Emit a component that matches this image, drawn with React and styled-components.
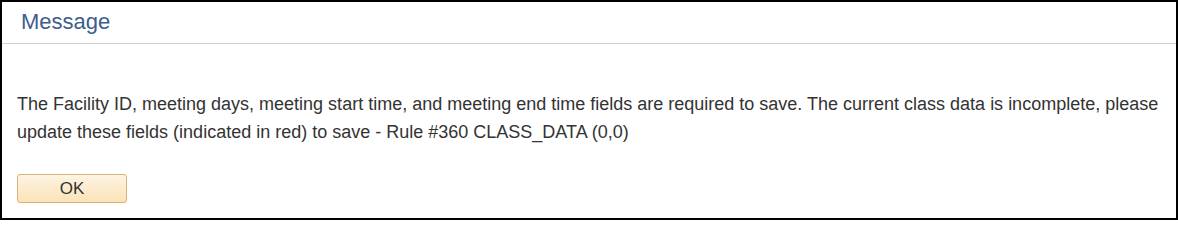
import React from "react";
import styled, { createGlobalStyle } from "styled-components";

const Global = createGlobalStyle`
  html, body { margin: 0; padding: 0; background: #fff; }
  * { box-sizing: border-box; }
`;

const Dialog = styled.div`
  width: 1178px;
  height: 220px;
  border: 2px solid #000;
  background: #fff;
  display: flex;
  flex-direction: column;
  font-family: "Liberation Sans", Arial, sans-serif;
`;

const Header = styled.div`
  height: 42px;
  border-bottom: 1px solid #cdd0d4;
  display: flex;
  align-items: center;
  padding: 0 0 1px 19px;
`;

const Title = styled.h1`
  margin: 0;
  font-size: 22px;
  font-weight: normal;
  color: #3d5d8d;
`;

const Body = styled.div`
  padding: 46px 15px 0 15px;
  display: flex;
  flex-direction: column;
  align-items: flex-start;
`;

const Text = styled.p`
  margin: 0;
  font-size: 18px;
  line-height: 28px;
  color: #333;
`;

const Button = styled.button`
  margin-top: 28px;
  width: 110px;
  height: 29px;
  border: 1px solid #d9b27c;
  border-radius: 3px;
  background: linear-gradient(to bottom, #fdf4e3, #fbe3b7);
  font-family: "Liberation Sans", Arial, sans-serif;
  font-size: 17px;
  color: #333;
  padding: 0;
  cursor: pointer;
`;

export default function App() {
  return (
    <>
      <Global />
      <Dialog>
        <Header>
          <Title>Message</Title>
        </Header>
        <Body>
          <Text>
            The Facility ID, meeting days, meeting start time, and meeting end time fields are required to save. The current class data is incomplete, please update these fields (indicated in red) to save - Rule #360 CLASS_DATA (0,0)
          </Text>
          <Button>OK</Button>
        </Body>
      </Dialog>
    </>
  );
}
